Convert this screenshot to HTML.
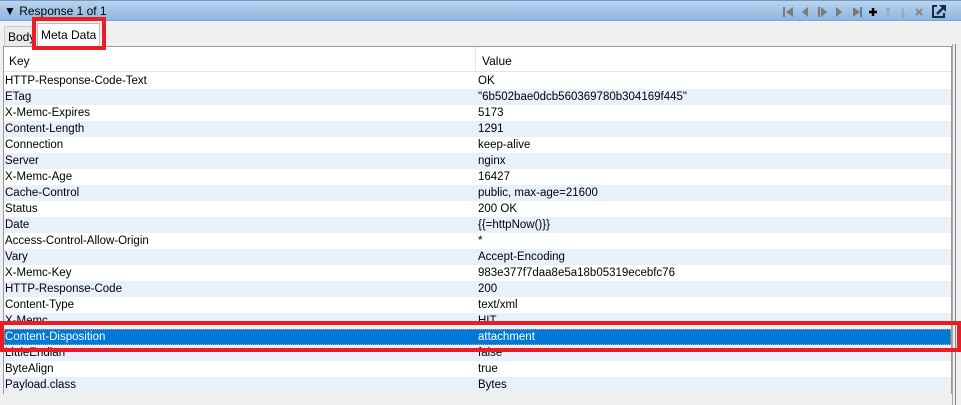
<!DOCTYPE html>
<html><head><style>
*{margin:0;padding:0;box-sizing:border-box}
body{width:961px;height:405px;background:#f0f0f0;font-family:"Liberation Sans",sans-serif;font-size:11px;color:#000;position:relative;overflow:hidden}
.hdr{position:absolute;left:0;top:0;width:961px;height:21px;background:linear-gradient(#b9d4ee,#8db6e0);border-top:1px solid #6f9acb;border-bottom:1px solid #7ea6d3}
.hdr .t{position:absolute;left:4px;top:3px;font-size:12px}
.tabs{position:absolute;top:22px;left:0;width:961px;height:24px}
.tab{position:absolute;top:4px;height:20px;border:1px solid #ccc;border-bottom:none;background:#eaeaea;padding:3px 3px 0;font-size:12px;white-space:nowrap}
.tab.sel{background:#fff;top:1px;height:23px;border-color:#bbb;padding-top:4px}
.panel{position:absolute;left:3px;top:46px;width:949px;height:348px;border:1px solid #999;background:#fff}
.side{position:absolute;left:952px;top:44px;width:4px;height:361px;border-left:1px solid #aaa;border-right:1px solid #888;background:#ececec}
.th{position:absolute;left:0;top:0;width:947px;height:25px;border-bottom:1px solid #e4e4e4;background:#fff;font-size:12px}
.th span{position:absolute;top:7px}
.th .dv{position:absolute;left:471px;top:0;width:1px;height:25px;background:#e4e4e4}
.row{position:absolute;left:0;width:947px;height:16px;font-size:11.5px;line-height:16px}
.row.a{background:#e9f0fa}
.row span{position:absolute;top:0;white-space:nowrap}
.k{left:1px}.v{left:474px}
.row.s{background:#0078d7;color:#fff;outline:1px dotted #e0a050;outline-offset:-1px}
.rb{position:absolute;border:4px solid #ec1c24}
.bottom{position:absolute;left:4px;top:391px;width:947px;height:14px;background:#f0f0f0}
</style></head><body>
<div class="hdr"><div class="t">&#9660; Response 1 of 1</div>
<svg style="position:absolute;left:780px;top:4px" width="170" height="14" viewBox="780 4 170 14">
<g fill="#7a7a7a">
<rect x="783" y="6" width="2" height="10"/><path d="M793 6v10l-7-5z"/>
<path d="M808 6v10l-6-5z"/>
<rect x="818" y="6" width="2" height="10"/><path d="M821 6v10l6-5z"/>
<path d="M836 6v10l6-5z"/>
<path d="M853 6v10l7-5z"/><rect x="860" y="6" width="2" height="10"/>
</g>
<path d="M869 11h8M873 7v8" stroke="#000" stroke-width="2.5"/>
<path d="M888 16V7M886 9l2-2 2 2" stroke="#999" stroke-width="1" fill="none"/>
<path d="M903 7v9M901 14l2 2 2-2" stroke="#999" stroke-width="1" fill="none"/>
<path d="M916 8l6 6M922 8l-6 6" stroke="#888" stroke-width="2"/>
</svg>
<svg style="position:absolute;left:931px;top:3px" width="16" height="15" viewBox="0 0 16 15"><path d="M6 2H2v11h11V9" fill="none" stroke="#1c2b44" stroke-width="2"/><path d="M8 1h7v7z" fill="#1c2b44"/><path d="M6 10L13 3" stroke="#1c2b44" stroke-width="2.5"/></svg>
</div>
<div class="tabs">
<div class="tab" style="left:4px;width:36px">Body</div>
<div class="tab sel" style="left:37px;width:63px">Meta Data</div>
</div>
<div class="side"></div>
<div class="panel">
<div class="th"><span style="left:5px">Key</span><div class="dv"></div><span style="left:478px">Value</span></div>
<div class="row" style="top:26px"><span class="k">HTTP-Response-Code-Text</span><span class="v">OK</span></div>
<div class="row a" style="top:42px"><span class="k">ETag</span><span class="v">"6b502bae0dcb560369780b304169f445"</span></div>
<div class="row" style="top:58px"><span class="k">X-Memc-Expires</span><span class="v">5173</span></div>
<div class="row a" style="top:74px"><span class="k">Content-Length</span><span class="v">1291</span></div>
<div class="row" style="top:90px"><span class="k">Connection</span><span class="v">keep-alive</span></div>
<div class="row a" style="top:106px"><span class="k">Server</span><span class="v">nginx</span></div>
<div class="row" style="top:122px"><span class="k">X-Memc-Age</span><span class="v">16427</span></div>
<div class="row a" style="top:138px"><span class="k">Cache-Control</span><span class="v">public, max-age=21600</span></div>
<div class="row" style="top:154px"><span class="k">Status</span><span class="v">200 OK</span></div>
<div class="row a" style="top:170px"><span class="k">Date</span><span class="v">{{=httpNow()}}</span></div>
<div class="row" style="top:186px"><span class="k">Access-Control-Allow-Origin</span><span class="v">*</span></div>
<div class="row a" style="top:202px"><span class="k">Vary</span><span class="v">Accept-Encoding</span></div>
<div class="row" style="top:218px"><span class="k">X-Memc-Key</span><span class="v">983e377f7daa8e5a18b05319ecebfc76</span></div>
<div class="row a" style="top:234px"><span class="k">HTTP-Response-Code</span><span class="v">200</span></div>
<div class="row" style="top:250px"><span class="k">Content-Type</span><span class="v">text/xml</span></div>
<div class="row a" style="top:266px"><span class="k">X-Memc</span><span class="v">HIT</span></div>
<div class="row s" style="top:282px"><span class="k">Content-Disposition</span><span class="v">attachment</span></div>
<div class="row a" style="top:298px"><span class="k">LittleEndian</span><span class="v">false</span></div>
<div class="row" style="top:314px"><span class="k">ByteAlign</span><span class="v">true</span></div>
<div class="row a" style="top:330px"><span class="k">Payload.class</span><span class="v">Bytes</span></div>
</div>
<div class="bottom"></div>
<div class="rb" style="left:32px;top:17px;width:74px;height:33px"></div>
<div class="rb" style="left:0;top:321px;width:961px;height:31px"></div>
</body></html>
